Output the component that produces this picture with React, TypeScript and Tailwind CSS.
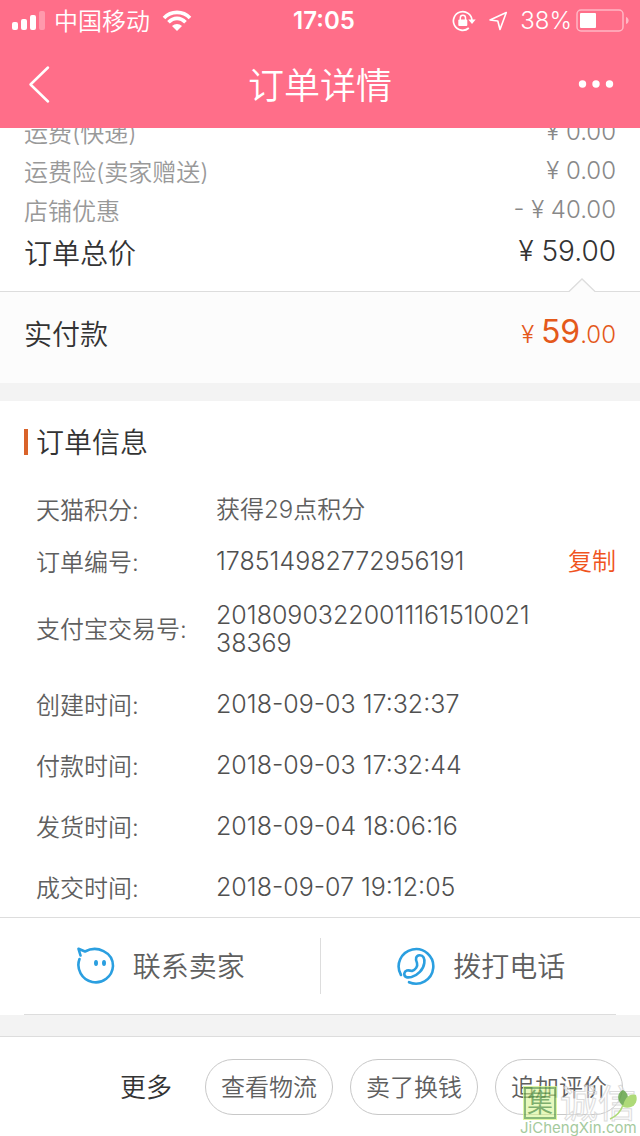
import type { ReactNode } from 'react'

interface PriceRow {
  label: string
  value: string
}

interface InfoRow {
  label: string
  value: string
}

const PRICE_ROWS: PriceRow[] = [
  { label: '运费(快递)', value: '¥ 0.00' },
  { label: '运费险(卖家赠送)', value: '¥ 0.00' },
  { label: '店铺优惠', value: '- ¥ 40.00' },
]

const TIME_ROWS: InfoRow[] = [
  { label: '创建时间:', value: '2018-09-03 17:32:37' },
  { label: '付款时间:', value: '2018-09-03 17:32:44' },
  { label: '发货时间:', value: '2018-09-04 18:06:16' },
  { label: '成交时间:', value: '2018-09-07 19:12:05' },
]

const ACTIONS = ['查看物流', '卖了换钱', '追加评价']

function StatusBar() {
  return (
    <div className="grid h-10 grid-cols-3 items-center px-3 pt-0.5">
      <div className="flex items-center gap-2">
        <svg width="34" height="20" viewBox="0 0 34 20" fill="#fff" aria-hidden="true">
          <rect x="0" y="11" width="6" height="8" rx="2" />
          <rect x="9" y="8" width="6" height="11" rx="2" />
          <rect x="18" y="4" width="6" height="15" rx="2" />
          <rect x="27" y="0" width="6" height="19" rx="2" opacity="0.3" />
        </svg>
        <span className="pt-0.5 text-2xl leading-9">中国移动</span>
        <svg className="ml-1" width="30" height="22" viewBox="0 0 30 22" aria-hidden="true">
          <g fill="none" stroke="#fff" strokeWidth="3.600">
            <path d="M2 8 C9 0.500 21 0.500 28 8" />
            <path d="M6.500 12.300 C11.500 7 18.500 7 23.500 12.300" />
          </g>
          <path d="M15 21 L10 16 C13 13.200 17 13.200 20 16 Z" fill="#fff" />
        </svg>
      </div>
      <div className="pl-2 text-center text-2xl font-semibold leading-9">17:05</div>
      <div className="flex items-center justify-end">
        {/* rotation lock */}
        <svg width="24" height="22" viewBox="0 0 24 22" aria-hidden="true">
          <path d="M16.800 18 A9.300 9.300 0 1 1 20 10.500" fill="none" stroke="#fff" strokeWidth="1.700" />
          <path d="M16.300 9.500 H23.700 L20 14 Z" fill="#fff" />
          <rect x="6.300" y="9.500" width="9" height="6.500" rx="1" fill="#fff" />
          <path d="M8.300 10 V7.800 A2.600 2.600 0 0 1 13.500 7.800 V10" fill="none" stroke="#fff" strokeWidth="1.500" />
        </svg>
        <svg className="ml-3" width="20" height="20" viewBox="0 0 20 20" aria-hidden="true">
          <path d="M18.300 1.500 L2 9 L9.800 10 L12 18.500 Z" fill="none" stroke="#fff" strokeWidth="1.600" strokeLinejoin="round" />
        </svg>
        <span className="ml-3 text-2xl font-light leading-9">38%</span>
        <svg className="-mr-0.5 ml-1 shrink-0" width="54" height="24" viewBox="0 0 54 24" aria-hidden="true">
          <rect x="1" y="1" width="46" height="21" rx="4" fill="none" stroke="#fff" strokeWidth="1.500" opacity="0.5" />
          <rect x="4" y="4" width="16" height="15" rx="1" fill="#fff" />
          <path d="M50 8 C53.500 9 53.500 14 50 15 Z" fill="#fff" opacity="0.5" />
        </svg>
      </div>
    </div>
  )
}

function NavBar() {
  return (
    <div className="flex h-[88px] items-center justify-between px-6">
      <button type="button" aria-label="返回" className="w-12">
        <svg width="30" height="40" viewBox="0 0 30 40" fill="none" stroke="#fff" strokeWidth="2.500" strokeLinecap="round" strokeLinejoin="round" aria-hidden="true">
          <path d="M24 3.500 L6.500 20.500 L24 37.500" />
        </svg>
      </button>
      <h1 className="pt-1 text-4xl">订单详情</h1>
      <button type="button" aria-label="更多选项" className="flex w-12 justify-end">
        <svg width="40" height="10" viewBox="0 0 40 10" fill="#fff" aria-hidden="true">
          <circle cx="6.500" cy="5" r="3.700" />
          <circle cx="20" cy="5" r="3.700" />
          <circle cx="33.500" cy="5" r="3.700" />
        </svg>
      </button>
    </div>
  )
}

function InfoLine({ label, className, children }: { label: string; className: string; children: ReactNode }) {
  return (
    <div className={`flex items-center pl-3 ${className}`}>
      <dt className="w-[180px] shrink-0 pt-1">{label}</dt>
      <dd className="flex min-w-0 flex-1 items-center justify-between pt-0.5">{children}</dd>
    </div>
  )
}

function Watermark() {
  return (
    <div className="pointer-events-none absolute bottom-0 right-0 w-[120px] font-normal opacity-80">
      <div className="flex items-center gap-1 pl-1">
        <span className="flex size-8 items-center justify-center border-2 border-[#6fa85a] bg-[#d5f58c]/70 text-[26px] leading-none text-[#5f9a4a] ring-1 ring-[#d5f58c]">集</span>
        <span className="text-[38px] leading-8 text-white/50 [-webkit-text-stroke:1px_#d4d4d4]">诚信</span>
      </div>
      <svg className="absolute right-0.5 top-0.5" width="30" height="32" viewBox="0 0 30 32" aria-hidden="true">
        <path d="M15 17 C8 11 9 4 15 1 C21 4 22 11 15 17 Z" fill="#5a9e3c" />
        <path d="M15 18 C16 9 22 4 28 6 C31 14 24 21 15 18 Z" fill="#9bd257" />
        <path d="M15 16 C13 22 9 27 2 30" fill="none" stroke="#9bd257" strokeWidth="1.500" />
      </svg>
      <div className="whitespace-nowrap text-[15px] leading-[18px] text-[#8fbd86]">JiChengXin.com</div>
    </div>
  )
}

export default function App() {
  return (
    <div className="relative flex min-h-screen flex-col overflow-hidden bg-white font-['Inter','Noto_Sans_CJK_SC',sans-serif] text-2xl font-[350] text-[#5f5f5f]">
      <header className="relative z-10 bg-[#ff6e89] text-white">
        <StatusBar />
        <NavBar />
      </header>

      <main>
        {/* scrolled price list, its first row runs under the header */}
        <section className="-mt-4 px-6 pb-[18px]">
          <dl>
            {PRICE_ROWS.map(row => (
              <div key={row.label} className="flex h-[39px] items-center justify-between text-[#999]">
                <dt className="pt-1">{row.label}</dt>
                <dd className="text-[#888]">{row.value}</dd>
              </div>
            ))}
            <div className="flex h-11 items-center justify-between text-[28px] text-[#333]">
              <dt className="pt-2">订单总价</dt>
              <dd className="pt-0.5">¥ 59.00</dd>
            </div>
          </dl>
        </section>

        <section className="relative flex h-[92px] items-center justify-between border-t border-[#ddd] bg-[#fcfcfc] px-6 pb-2">
          <svg className="absolute -top-[14px] right-11" width="28" height="15" viewBox="0 0 28 15" aria-hidden="true">
            <path d="M1 14 L14 1 L27 14 V15 H1 Z" fill="#fcfcfc" />
            <path d="M1 13.500 L14 1 L27 13.500" fill="none" stroke="#ddd" strokeWidth="1.300" />
          </svg>
          <h2 className="pt-1 text-[28px] text-[#333]">实付款</h2>
          <p className="pb-0.5 text-[#e4591b]">¥ <span className="text-[32px] font-normal">59</span>.00</p>
        </section>

        <section className="border-t-[18px] border-[#f3f3f3] px-6">
          <h2 className="flex h-[82px] items-center gap-2 text-[28px] text-[#333]">
            <span className="h-[26px] w-1 bg-[#d9632a]" />
            <span className="pt-1">订单信息</span>
          </h2>
          <dl>
            <InfoLine label="天猫积分:" className="h-[52px]">获得29点积分</InfoLine>
            <InfoLine label="订单编号:" className="h-[52px]">
              <span className="text-[25px] text-[#505050]">178514982772956191</span>
              <button type="button" className="text-[#f0541e]">复制</button>
            </InfoLine>
            <InfoLine label="支付宝交易号:" className="h-[82px]">
              <span className="w-[320px] break-all text-[25px] leading-7 text-[#505050]">2018090322001116151002138369</span>
            </InfoLine>
            <div className="pt-1">
              {TIME_ROWS.map(row => (
                <InfoLine key={row.label} label={row.label} className="h-[61px]">
                  <span className="text-[25px] text-[#505050]">{row.value}</span>
                </InfoLine>
              ))}
            </div>
          </dl>
        </section>

        <section className="border-t border-[#ddd]">
          <div className="flex items-center py-5 text-[28px]">
            <button type="button" className="flex h-14 flex-1 items-center justify-center gap-[18px] border-r border-[#ddd]">
              <svg width="40" height="40" viewBox="0 0 40 40" fill="none" stroke="#2b9fe0" strokeWidth="2.600" strokeLinecap="round" strokeLinejoin="round" aria-hidden="true">
                <path d="M5.500 9.500 L3.500 2.800 L10 5.500 C22 -1 38 6 38 20 A17.300 17.300 0 1 1 4.500 13" />
                <ellipse cx="21" cy="17" rx="2" ry="3" fill="#2b9fe0" stroke="none" />
                <ellipse cx="29" cy="17" rx="2" ry="3" fill="#2b9fe0" stroke="none" />
              </svg>
              <span className="pt-1">联系卖家</span>
            </button>
            <button type="button" className="flex h-14 flex-1 items-center justify-center gap-[18px]">
              <svg width="40" height="40" viewBox="0 0 40 40" fill="none" stroke="#2b9fe0" strokeWidth="2.600" strokeLinecap="round" strokeLinejoin="round" aria-hidden="true">
                <path d="M6 29 A17.300 17.300 0 1 1 14 36.200" />
                <path d="M22 17 C20 13 21 9.500 24.500 9.200 C28.500 9 29.800 12.500 29.300 17 C28.500 23.500 22.500 29.500 16.500 31 C12 32 9 31 9.300 27.500 C9.800 24.300 13 23.800 17 25 C20.500 23.800 23 20.500 22 17 Z" />
              </svg>
              <span className="pt-1">拨打电话</span>
            </button>
          </div>
          <hr className="mx-6 border-[#ddd]" />
        </section>
        <div className="h-[21px] bg-[#f3f3f3]" />
      </main>

      <footer className="flex flex-1 items-center justify-end gap-[17px] border-t border-[#ddd] px-[17px] py-[22px]">
        <button type="button" className="mr-4 pt-0.5 text-[26px] text-[#333]">更多</button>
        {ACTIONS.map(action => (
          <button key={action} type="button" className="h-14 w-32 rounded-full border border-[#c8c8c8] pt-0.5">
            {action}
          </button>
        ))}
      </footer>
      <Watermark />
    </div>
  )
}
